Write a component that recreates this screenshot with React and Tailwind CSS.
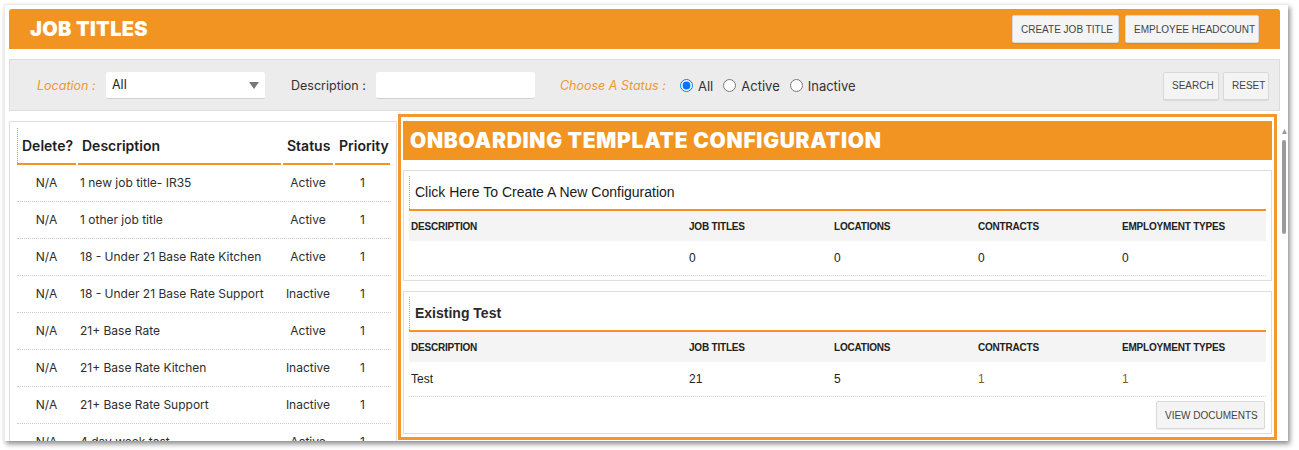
import React from 'react';

const inter = { fontFamily: 'Inter, "Noto Sans", sans-serif' };
const arial = { fontFamily: '"Liberation Sans", Arial, sans-serif' };

const jobTitles = [
  { name: '1 new job title- IR35', status: 'Active' },
  { name: '1 other job title', status: 'Active' },
  { name: '18 - Under 21 Base Rate Kitchen', status: 'Active' },
  { name: '18 - Under 21 Base Rate Support', status: 'Inactive' },
  { name: '21+ Base Rate', status: 'Active' },
  { name: '21+ Base Rate Kitchen', status: 'Inactive' },
  { name: '21+ Base Rate Support', status: 'Inactive' },
  { name: '4 day week test', status: 'Active' },
  { name: 'Admin Assistant', status: 'Active' },
];

const configCols = ['DESCRIPTION', 'JOB TITLES', 'LOCATIONS', 'CONTRACTS', 'EMPLOYMENT TYPES'];

function GreyButton({ children, className = '' }) {
  return (
    <button
      className={`h-[28px] px-[8px] whitespace-nowrap bg-[#f4f4f4] border border-[#d9d9d9] rounded-[2px] text-[10px] text-[#444] shadow-[0_1px_1px_rgba(0,0,0,0.08)] ${className}`}
      style={arial}
    >
      {children}
    </button>
  );
}

function Radio({ label, checked }) {
  return (
    <label className="flex items-center gap-[5px] text-[13px] text-[#333]">
      <input type="radio" name="status" defaultChecked={checked} className="w-[13px] h-[13px] m-0 accent-[#0075ff]" />
      <span className="mt-[2px]">{label}</span>
    </label>
  );
}

function ConfigCard({ title, bold, row, showButton, className = '' }) {
  const linkish = (i) => (i >= 3 && row[i] !== '0' ? 'text-[#8a5a1c]' : 'text-[#222]');
  return (
    <div className={`border border-[#dedede] bg-white px-[5px] pt-[5px] pb-[4px] ${className}`} style={arial}>
      <div className="border-b-2 border-[#f39422]">
        <div className="h-[33px] border-l border-dotted border-[#f0922b] flex items-center pl-[5px]">
          <span className={`text-[14px] ${bold ? 'font-bold text-[#2a2a2a]' : 'text-[#1a1a1a]'}`}>{title}</span>
        </div>
      </div>
      <div className="grid grid-cols-[278px_145px_144px_144px_1fr] bg-[#f4f4f4] h-[30px] items-center pl-[2px]">
        {configCols.map((c) => (
          <span key={c} className="text-[10px] font-bold text-[#222] tracking-[-0.2px]">{c}</span>
        ))}
      </div>
      <div className="grid grid-cols-[278px_145px_144px_144px_1fr] h-[35px] items-center pl-[2px] border-b border-dotted border-[#cfcfcf]">
        {row.map((v, i) => (
          <span key={i} className={`text-[12px] ${linkish(i)}`}>{v}</span>
        ))}
      </div>
      {showButton && (
        <div className="flex justify-end pt-[4px] pr-[1px]">
          <GreyButton className="w-[109px]">VIEW DOCUMENTS</GreyButton>
        </div>
      )}
    </div>
  );
}

function HeadCell({ children, first }) {
  return (
    <div className="border-b-2 border-[#f39422]">
      <div className={`h-[35px] flex items-center pl-[4px] text-[14px] font-semibold text-[#1e1e1e] ${first ? 'border-l border-dotted border-[#f0922b]' : ''}`}>
        {children}
      </div>
    </div>
  );
}

export default function App() {
  return (
    <div className="w-[1299px] h-[450px] bg-white pl-[4px] pt-[4px] overflow-hidden">
      <div className="w-[1284px] h-[437px] bg-white flex overflow-hidden border-t border-l border-[#ececec] shadow-[2px_3px_5px_rgba(0,0,0,0.45)]">
        {/* page content */}
        <div className="w-[1275px] shrink-0 pl-[4px] pt-[4px]">
          {/* title bar */}
          <div className="h-[40px] bg-[#f29422] rounded-t-[3px] flex items-center justify-between pl-[21px] pr-[21px]">
            <h1 className="text-white text-[20px] font-black tracking-[0.3px]" style={inter}>JOB TITLES</h1>
            <div className="flex gap-[6px]">
              <GreyButton className="w-[107px] px-0">CREATE JOB TITLE</GreyButton>
              <GreyButton className="w-[134px] px-0">EMPLOYEE HEADCOUNT</GreyButton>
            </div>
          </div>

          {/* filter bar */}
          <div className="mt-[10px] h-[52px] bg-[#ececec] border border-[#dcdcdc] flex items-center pl-[27px] pr-[10px]" style={inter}>
            <span className="mt-[3px] text-[12.5px] italic text-[#f0982f] w-[69px]">Location :</span>
            <div className="mt-[1px] w-[159px] h-[27px] bg-white rounded-[2px] border-b border-[#d0d0d0] flex items-center justify-between pl-[6px] pr-[6px]">
              <span className="text-[12.5px] text-[#222]">All</span>
              <svg width="10" height="7" viewBox="0 0 10 7"><path d="M0 0h10L5 7z" fill="#777" /></svg>
            </div>
            <span className="mt-[3px] ml-[26px] text-[12.5px] text-[#333] w-[85px]">Description :</span>
            <div className="mt-[1px] w-[159px] h-[27px] bg-white rounded-[2px] border-b border-[#d0d0d0]" />
            <span className="mt-[3px] ml-[25px] text-[12.5px] italic text-[#f0982f] w-[120px]">Choose A Status :</span>
            <div className="mt-[1px] flex items-center gap-[10px]">
              <Radio label="All" checked />
              <Radio label="Active" />
              <Radio label="Inactive" />
            </div>
            <div className="mt-[1px] ml-auto flex gap-[4px]">
              <GreyButton className="w-[56px] px-0">SEARCH</GreyButton>
              <GreyButton className="w-[46px] px-0">RESET</GreyButton>
            </div>
          </div>

          {/* lower area */}
          <div className="flex items-start gap-[1px]">
            {/* job titles table */}
            <div className="mt-[10px] w-[388px] h-[330px] border border-[#dedede] bg-white pl-[7px] pr-[5px] pt-[6px]" style={inter}>
              <div className="grid grid-cols-[59px_203px_50px_55px] gap-x-[2px]">
                <HeadCell first>Delete?</HeadCell>
                <HeadCell>Description</HeadCell>
                <HeadCell>Status</HeadCell>
                <HeadCell>Priority</HeadCell>
              </div>
              {jobTitles.map((j) => (
                <div key={j.name} className="grid grid-cols-[59px_203px_50px_55px] gap-x-[2px] h-[37px] border-b border-dotted border-[#cccccc] items-center text-[12px] text-[#2e2e2e]">
                  <span className="text-center">N/A</span>
                  <span className="pl-[2px]">{j.name}</span>
                  <span className="text-center">{j.status}</span>
                  <span className="text-center">1</span>
                </div>
              ))}
            </div>

            {/* onboarding panel */}
            <div className="mt-[3px] w-[879px] h-[326px] border-[3px] border-[#f7962e] px-[2px] pt-[4px] overflow-hidden bg-white">
              <div className="h-[39px] bg-[#f29422] flex items-center pl-[7px]">
                <h2 className="text-white text-[21px] font-black tracking-[0.7px]" style={inter}>ONBOARDING TEMPLATE CONFIGURATION</h2>
              </div>
              <ConfigCard className="mt-[10px]" title="Click Here To Create A New Configuration" row={['', '0', '0', '0', '0']} />
              <ConfigCard className="mt-[10px]" title="Existing Test" bold row={['Test', '21', '5', '1', '1']} showButton />
            </div>
          </div>
        </div>

        {/* scrollbar gutter */}
        <div className="w-[9px] flex flex-col items-center pt-[124px]">
          <svg width="5" height="5" viewBox="0 0 5 5"><path d="M0 5L2.5 0L5 5z" fill="#9a9a9a" /></svg>
          <div className="mt-[6px] w-[4px] h-[94px] rounded-full bg-[#9a9a9a]" />
        </div>
      </div>
    </div>
  );
}
